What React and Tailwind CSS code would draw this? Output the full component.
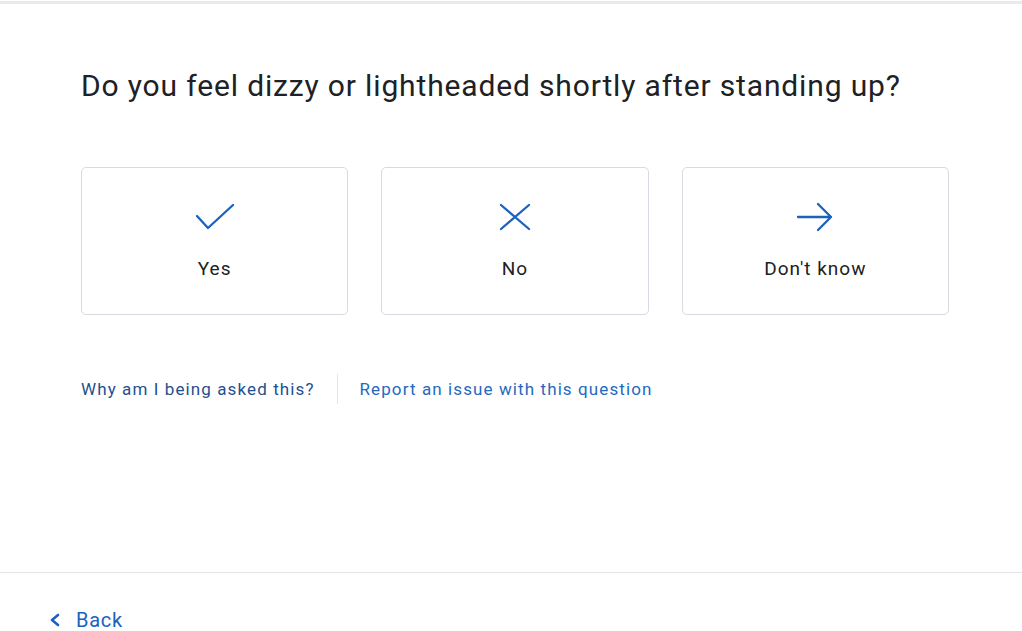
import React from 'react';

const Check = () => (
  <svg width="40" height="28" viewBox="0 0 40 28" fill="none" stroke="#1a62bd" strokeWidth="2.3" strokeLinecap="round" strokeLinejoin="round">
    <path d="M2 13 L13 25 L38 2" />
  </svg>
);

const Cross = () => (
  <svg width="32" height="28" viewBox="0 0 32 28" fill="none" stroke="#1a62bd" strokeWidth="2.3" strokeLinecap="round">
    <path d="M2 2 L30 26 M30 2 L2 26" />
  </svg>
);

const Arrow = () => (
  <svg width="38" height="30" viewBox="0 0 38 30" fill="none" stroke="#1a62bd" strokeWidth="2.3" strokeLinecap="round" strokeLinejoin="round">
    <path d="M2 15 H35 M22 2 L35 15 L22 28" />
  </svg>
);

const options = [
  { label: 'Yes', icon: <Check /> },
  { label: 'No', icon: <Cross /> },
  { label: "Don't know", icon: <Arrow /> },
];

export default function App() {
  return (
    <div className="w-[1022px] h-[631px] bg-white flex flex-col overflow-hidden" style={{ fontFamily: 'Roboto, "Liberation Sans", sans-serif' }}>
      <div className="h-[3px] mt-[1px] bg-[#e8eaee]" />

      {/* Question */}
      <main className="flex-grow pl-[81px] pr-[73px]">
        <h1 className="mt-[64px] text-[30px] leading-[36px] text-[#202124] tracking-[0.85px] whitespace-nowrap">
          Do you feel dizzy or lightheaded shortly after standing up?
        </h1>

        <div className="mt-[63px] grid grid-cols-3 gap-[33px]">
          {options.map((o) => (
            <button
              key={o.label}
              className="h-[148px] border border-[#d6dbe2] rounded-[5px] flex flex-col items-center pt-[34px] bg-white"
            >
              <div className="h-[30px] flex items-center justify-center">{o.icon}</div>
              <span className="mt-[25px] text-[19px] leading-[24px] text-[#202124] tracking-[1px]">{o.label}</span>
            </button>
          ))}
        </div>

        <div className="mt-[59px] flex items-center">
          <a className="text-[17px] leading-[22px] text-[#1f4f8f] tracking-[1.1px]">Why am I being asked this?</a>
          <div className="mx-[22px] w-px h-[30px] bg-[#e3e6ea]" />
          <a className="text-[17px] leading-[22px] text-[#2569c0] tracking-[1.1px]">Report an issue with this question</a>
        </div>
      </main>

      {/* Footer */}
      <div className="h-px bg-[#e1e4e8]" />
      <div className="h-[58px] flex items-center pl-[49px] pt-[38px] pb-[2px]">
        <svg width="12" height="14" viewBox="0 0 12 14" fill="none" stroke="#1a62bd" strokeWidth="2.6" strokeLinecap="round" strokeLinejoin="round">
          <path d="M9 2 L3 7 L9 12" />
        </svg>
        <span className="ml-[15px] text-[20px] leading-[20px] text-[#1a62bd] tracking-[0.7px]">Back</span>
      </div>
    </div>
  );
}
